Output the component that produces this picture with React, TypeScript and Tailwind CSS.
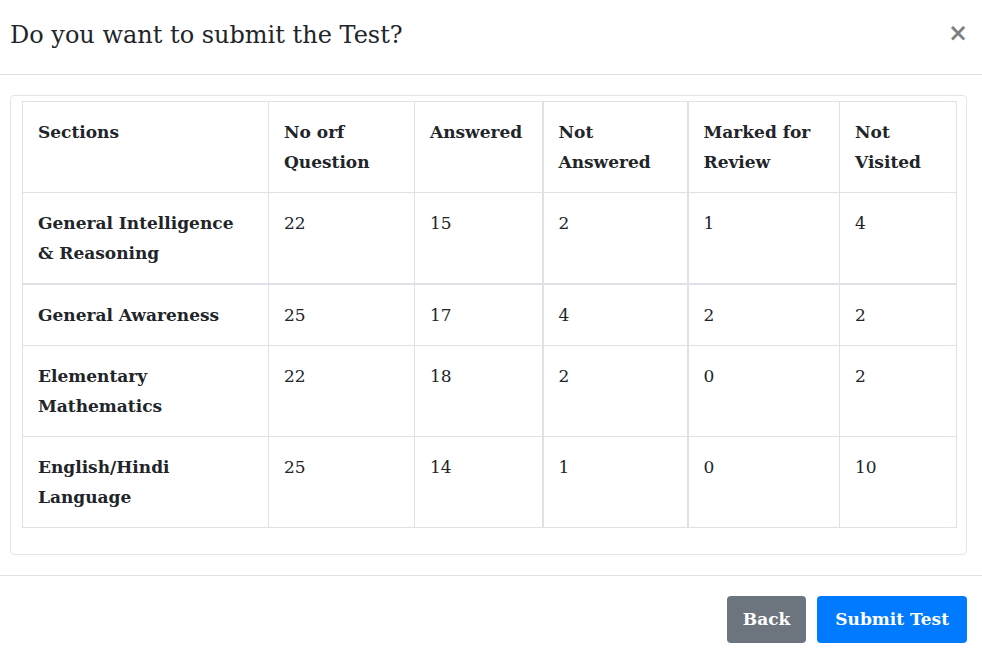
const rows = [
  { name: ['General Intelligence', '& Reasoning'], total: 22, answered: 15, notAnswered: 2, marked: 1, notVisited: 4 },
  { name: ['General Awareness'], total: 25, answered: 17, notAnswered: 4, marked: 2, notVisited: 2 },
  { name: ['Elementary', 'Mathematics'], total: 22, answered: 18, notAnswered: 2, marked: 0, notVisited: 2 },
  { name: ['English/Hindi', 'Language'], total: 25, answered: 14, notAnswered: 1, marked: 0, notVisited: 10 },
]

const cell = 'border border-[#dee2e6] pl-[15px] pr-2 py-[15px] align-top text-left'

export default function App() {
  return (
    <div className="w-[982px] h-[658px] bg-white text-[#212529] text-[17px] leading-[30px] font-['DejaVu_Serif',serif] overflow-hidden">
      {/* header */}
      <div className="flex items-center justify-between pl-[10px] pr-[17px] h-[75px] border-b border-[#dee2e6]">
        <h5 className="text-[24px] leading-[30px] -mt-1">Do you want to submit the Test?</h5>
        <button className="text-[24px] font-bold text-black/50 leading-none -mt-2 -mr-[3px] font-['DejaVu_Sans',sans-serif]">×</button>
      </div>

      {/* body */}
      <div className="pt-[20px] pb-[20px] pl-[10px] pr-[15px]">
        <div className="border border-[#e3e6e9] rounded-[4px] pt-[5px] pb-[26px] px-[11px]">
          <table className="border-collapse table-fixed w-[934px]">
            <colgroup>
              <col className="w-[246px]" />
              <col className="w-[146px]" />
              <col className="w-[128px]" />
              <col className="w-[145px]" />
              <col className="w-[152px]" />
              <col className="w-[117px]" />
            </colgroup>
            <thead>
              <tr>
                <th className={`${cell} font-bold`}>Sections</th>
                <th className={`${cell} font-bold`}>No orf<br />Question</th>
                <th className={`${cell} font-bold`}>Answered</th>
                <th className={`${cell} font-bold border-l-2`}>Not<br />Answered</th>
                <th className={`${cell} font-bold border-l-2`}>Marked for<br />Review</th>
                <th className={`${cell} font-bold`}>Not<br />Visited</th>
              </tr>
            </thead>
            <tbody>
              {rows.map((r, i) => {
                const top = i === 1 ? 'border-t-2' : ''
                return (
                  <tr key={i}>
                    <th className={`${cell} ${top} font-bold`}>
                      {r.name.map((n, j) => (
                        <span key={j} className="block whitespace-nowrap">{n}</span>
                      ))}
                    </th>
                    <td className={`${cell} ${top}`}>{r.total}</td>
                    <td className={`${cell} ${top}`}>{r.answered}</td>
                    <td className={`${cell} ${top} border-l-2`}>{r.notAnswered}</td>
                    <td className={`${cell} ${top} border-l-2`}>{r.marked}</td>
                    <td className={`${cell} ${top}`}>{r.notVisited}</td>
                  </tr>
                )
              })}
            </tbody>
          </table>
        </div>
      </div>

      {/* footer */}
      <div className="flex justify-end gap-[11px] border-t border-[#dee2e6] pt-[20px] pr-[15px]">
        <button className="bg-[#6c757d] text-white font-bold rounded-[4px] px-[16px] py-[8px] leading-[31px]">Back</button>
        <button className="bg-[#007bff] text-white font-bold rounded-[4px] px-[18px] py-[8px] leading-[31px]">Submit Test</button>
      </div>
    </div>
  )
}
